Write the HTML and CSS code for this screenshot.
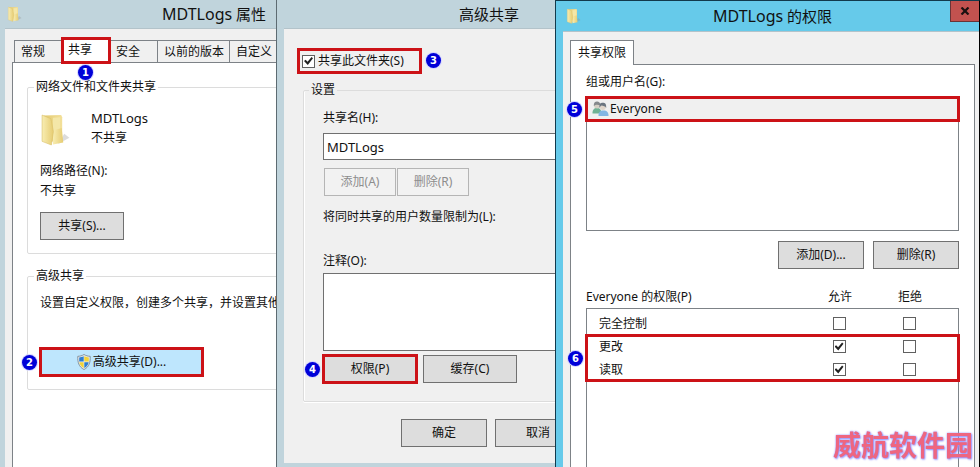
FILE: index.html
```html
<!DOCTYPE html>
<html lang="zh-CN">
<head>
    <meta charset="UTF-8">
    <meta name="viewport" content="width=device-width, initial-scale=1.0">
    <title>MDTLogs 共享权限</title>
    <link rel="stylesheet" href="styles.css">
</head>
<body>
    <svg class="defs" width="0" height="0" aria-hidden="true">
        <defs>
            <linearGradient id="folderFront" x1="0" x2="1">
                <stop offset="0" stop-color="#f8edb2"/>
                <stop offset="1" stop-color="#e6cc72"/>
            </linearGradient>
            <linearGradient id="folderBack" x1="0" x2="1">
                <stop offset="0" stop-color="#e3ca70"/>
                <stop offset="1" stop-color="#f3e09a"/>
            </linearGradient>
            <symbol id="folder" viewBox="0 0 30 32">
                <path d="M17 30 28 24 23 20z" fill="#8a8a8a" opacity=".3"/>
                <path d="M3 2.500 20 2 21 4V24L8 29z" fill="url(#folderBack)"/>
                <path d="M12 4.500 19 4V16L12 18z" fill="#f4e7a8"/>
                <path d="M12 17 20.500 14.500 22 28.500 12 30.500z" fill="url(#folderFront)"/>
                <path d="M1.500 2 10 5.500 12.500 18 10.500 31 1.500 27.500z" fill="url(#folderFront)" stroke="#dcc26c" stroke-width=".6"/>
            </symbol>
        </defs>
    </svg>

    <main class="desktop">
        <!-- 属性 -->
        <div class="pane">
            <section class="window window-props">
                <header class="title-bar">
                    <svg class="title-icon"><use href="#folder"/></svg>
                    <h1><span>MDTLogs</span> 属性</h1>
                </header>
                <div class="client">
                    <div class="tabs">
                        <button class="tab">常规</button>
                        <button class="tab active marked">共享<i class="badge badge-below">1</i></button>
                        <button class="tab">安全</button>
                        <button class="tab">以前的版本</button>
                        <button class="tab">自定义</button>
                    </div>
                    <div class="panel">
                        <fieldset class="group">
                            <legend>网络文件和文件夹共享</legend>
                            <div class="share-info">
                                <svg class="folder-icon"><use href="#folder"/></svg>
                                <div>
                                    <p class="share-name">MDTLogs</p>
                                    <p>不共享</p>
                                </div>
                            </div>
                            <p>网络路径(N):</p>
                            <p>不共享</p>
                            <button class="btn share-button">共享(S)...</button>
                        </fieldset>
                        <fieldset class="group group-advanced">
                            <legend>高级共享</legend>
                            <p>设置自定义权限，创建多个共享，并设置其他</p>
                            <button class="btn advanced-button marked">
                                <svg class="shield" viewBox="0 0 14 16">
                                    <path d="M7 .5C5 1.800 3 2.200.8 2.300.5 8 1.800 13 7 15.500 12.200 13 13.500 8 13.200 2.300 11 2.200 9 1.800 7 .5z" fill="#e8edf0" stroke="#7c8a94" stroke-width=".9"/>
                                    <path d="M6.700 2.200C5.200 3 3.800 3.300 2.200 3.400V7.600H6.700z" fill="#2f7fd0"/>
                                    <path d="M7.300 2.200C8.800 3 10.200 3.300 11.800 3.400V7.600H7.300z" fill="#f3d437"/>
                                    <path d="M2.300 8.200H6.700V14C4.200 12.600 2.800 10.800 2.300 8.200z" fill="#f3d437"/>
                                    <path d="M11.700 8.200H7.300V14C9.800 12.600 11.200 10.800 11.700 8.200z" fill="#2f7fd0"/>
                                </svg>高级共享(D)...<i class="badge badge-left">2</i>
                            </button>
                        </fieldset>
                    </div>
                </div>
            </section>
        </div>

        <!-- 高级共享 -->
        <div class="pane">
            <section class="window window-advanced">
                <header class="title-bar">
                    <h1>高级共享</h1>
                </header>
                <div class="client">
                    <label class="share-check marked">
                        <input type="checkbox" class="check" checked>共享此文件夹(S)<i class="badge badge-right">3</i>
                    </label>
                    <fieldset class="group group-settings">
                        <legend>设置</legend>
                        <label for="shareName">共享名(H):</label>
                        <input type="text" id="shareName" class="text-input" value="MDTLogs">
                        <div class="name-buttons">
                            <button class="btn" disabled>添加(A)</button>
                            <button class="btn" disabled>删除(R)</button>
                        </div>
                        <p class="limit-label">将同时共享的用户数量限制为(L):</p>
                        <label for="comment">注释(O):</label>
                        <textarea id="comment" class="text-input comment"></textarea>
                        <div class="action-buttons">
                            <button class="btn marked">权限(P)<i class="badge badge-left">4</i></button>
                            <button class="btn">缓存(C)</button>
                        </div>
                    </fieldset>
                    <div class="dialog-buttons">
                        <button class="btn">确定</button>
                        <button class="btn">取消</button>
                    </div>
                </div>
            </section>
        </div>

        <!-- 权限 -->
        <section class="window window-perms">
            <header class="title-bar">
                <svg class="title-icon"><use href="#folder"/></svg>
                <h1><span>MDTLogs</span> 的权限</h1>
                <button class="close" aria-label="关闭">
                    <svg viewBox="0 0 10 8"><path d="M1.500.5 8.500 7.500M8.500.5 1.500 7.500" stroke="#1a1010" stroke-width="2.200"/></svg>
                </button>
            </header>
            <div class="client">
                <div class="tabs">
                    <button class="tab active">共享权限</button>
                </div>
                <div class="panel">
                    <p>组或用户名(G):</p>
                    <ul class="user-list">
                        <li class="marked">
                            <svg class="users" viewBox="0 0 17 16">
                                <path d="M.5 12.500C.3 9 2 7 5 7s4.500 2 4.500 5.500z" fill="#6fb294"/>
                                <circle cx="5" cy="4.500" r="3" fill="#d5cfc4"/>
                                <path d="M1.800 5C1.500 2 3 .6 5 .6S8.500 2 8.400 4C6 4 4 3 1.800 5z" fill="#85898c"/>
                                <path d="M6.500 15C6.300 11.500 8 9.500 11.500 9.500s5.200 2 5 5.500z" fill="#82b6e4"/>
                                <circle cx="10.800" cy="6" r="3" fill="#e0d5ca"/>
                                <path d="M7.500 7C7 3 8.500 1.800 10.800 1.800S14.500 3 14.200 7C13.500 5 11 5 9.500 4.500 8.500 5 8 6 7.500 7z" fill="#6b7580"/>
                            </svg>Everyone<i class="badge badge-left">5</i>
                        </li>
                    </ul>
                    <div class="user-buttons">
                        <button class="btn">添加(D)...</button>
                        <button class="btn">删除(R)</button>
                    </div>
                    <table class="perms">
                        <thead>
                            <tr><th>Everyone 的权限(P)</th><th>允许</th><th>拒绝</th></tr>
                        </thead>
                        <tbody class="first">
                            <tr>
                                <td>完全控制</td>
                                <td><input type="checkbox" class="check" aria-label="允许完全控制"></td>
                                <td><input type="checkbox" class="check" aria-label="拒绝完全控制"></td>
                            </tr>
                        </tbody>
                        <tbody class="marked">
                            <tr>
                                <td>更改<i class="badge badge-left">6</i></td>
                                <td><input type="checkbox" class="check" aria-label="允许更改" checked></td>
                                <td><input type="checkbox" class="check" aria-label="拒绝更改"></td>
                            </tr>
                            <tr>
                                <td>读取</td>
                                <td><input type="checkbox" class="check" aria-label="允许读取" checked></td>
                                <td><input type="checkbox" class="check" aria-label="拒绝读取"></td>
                            </tr>
                        </tbody>
                    </table>
                </div>
            </div>
        </section>
    </main>
    <div class="watermark">威航软件园</div>
</body>
</html>
```
FILE: styles.css
```css
:root {
    --frame: #c0d4dc;
    --frame-active: #66caea;
    --client: #f0f0f0;
    --line: #7d8287;
    --group-line: #dcdcdc;
    --button-bg: #dddddd;
    --mark: #cc1217;
    --badge: #0000d8;
}

* {
    margin: 0;
    padding: 0;
    box-sizing: border-box;
}

body {
    font-family: "Noto Sans", "Noto Sans CJK SC", sans-serif;
    font-size: 12px;
    line-height: 20px;
    color: #111;
}

button,
input,
textarea {
    font: inherit;
    color: inherit;
}

.defs {
    position: absolute;
}

.desktop {
    display: grid;
    grid-template-columns: 277px 278px 1fr;
    height: 100vh;
    overflow: hidden;
}

/* windows */
.pane {
    display: flex;
    overflow: hidden;
    background: var(--frame);
}

.pane:first-child {
    border-right: 1px solid #5d6b72;
}

.window {
    display: flex;
    flex-direction: column;
    background: var(--frame);
}

.window-props {
    flex: 0 0 428px;
}

.window-advanced {
    flex: 0 0 424px;
}

.window-perms {
    background: var(--frame-active);
    border: 1px solid #123a4c;
    border-bottom: none;
    border-right-color: #000;
}

.title-bar {
    position: relative;
    display: flex;
    align-items: center;
    height: 28px;
    padding: 0 7px;
    flex: none;
}

.window-perms .title-bar {
    height: 30px;
    padding: 0 0 0 10px;
}

.title-bar h1 {
    flex: 1;
    text-align: center;
    font-size: 15px;
    font-weight: 400;
}

.title-bar h1 span {
    font-size: 16px;
}

.title-icon {
    width: 16px;
    height: 16px;
    margin-right: -16px;
}

.close {
    position: absolute;
    top: 0;
    right: 0;
    width: 29px;
    height: 21px;
    border: 1px solid #6a3437;
    border-top: none;
    border-right: none;
    background: #c2524f;
}

.close svg {
    width: 10px;
    height: 8px;
}

.client {
    flex: 1;
    display: flex;
    flex-direction: column;
    background: var(--client);
    border-top: 1px solid #b3c3ca;
}

.window-props .client {
    margin: 0 5px;
    padding: 11px 7px 0;
}

.window-advanced .client {
    flex: none;
    margin: 0 7px;
    padding: 20px 19px 16px;
}

.window-perms .client {
    margin-left: 7px;
    padding: 8px 4px 0 7px;
}

/* tabs */
.tabs {
    display: flex;
    padding-left: 2px;
}

.window-perms .tabs {
    padding-left: 0;
}

.tab {
    position: relative;
    flex: none;
    min-width: 48px;
    height: 22px;
    padding: 0 5px 0 6px;
    text-align: left;
    background: var(--client);
    border: 1px solid var(--line);
    border-bottom: none;
    border-left-width: 0;
    white-space: nowrap;
}

.tab:first-child {
    border-left-width: 1px;
}

.tab.active {
    z-index: 1;
    margin-top: -2px;
    height: 25px;
    margin-bottom: -1px;
    padding-bottom: 3px;
    background: #fff;
}

.window-perms .tab.active {
    margin-top: 0;
    padding: 0 7px;
}

.panel {
    flex: 1;
    display: flex;
    flex-direction: column;
    background: #fff;
    border: 1px solid var(--line);
    border-bottom: none;
}

.window-props .panel {
    padding: 14px;
    gap: 12px;
}

.window-perms .panel {
    padding: 7px 15px 0;
}

/* group boxes */
.group {
    border: 1px solid var(--group-line);
    border-radius: 2px;
    padding: 11px 12px 13px;
    white-space: nowrap;
}

.group legend {
    margin-left: -6px;
    padding: 0 2px;
}

.share-info {
    display: flex;
    gap: 19px;
    padding-bottom: 13px;
}

.folder-icon {
    width: 32px;
    height: 33px;
    margin-top: 5px;
}

.share-name {
    font-size: 13px;
}

.share-button {
    width: 84px;
    margin-top: 11px;
}

.group-advanced {
    padding-top: 7px;
    min-width: 0;
}

.advanced-button {
    display: flex;
    align-items: center;
    justify-content: center;
    width: 163px;
    margin-top: 35px;
}

.shield {
    width: 14px;
    height: 16px;
    margin-right: 2px;
}

/* buttons and fields */
.btn {
    position: relative;
    height: 28px;
    border: 1px solid #707070;
    background: var(--button-bg);
    white-space: nowrap;
}

.btn:disabled {
    color: #8d8d8d;
    border-color: #b5b5b5;
    background: #f2f2f2;
}

.advanced-button.btn {
    background: #bee6fd;
}

.check {
    appearance: none;
    display: block;
    flex: none;
    position: relative;
    width: 13px;
    height: 13px;
    background: #fff;
    border: 1px solid #606060;
}

.check:checked::after {
    content: '';
    position: absolute;
    inset: 1px;
    background: #222;
    clip-path: polygon(0 50%, 18% 36%, 40% 58%, 84% 6%, 100% 20%, 42% 94%);
}

.text-input {
    display: block;
    width: 100%;
    height: 27px;
    padding: 0 3px;
    font-size: 13px;
    background: #fff;
    border: 1px solid #707070;
    resize: none;
}

.comment {
    height: 78px;
}

.share-check {
    position: relative;
    display: flex;
    align-items: center;
    align-self: flex-start;
    gap: 3px;
    width: 123px;
    height: 24px;
    margin-left: -5px;
    padding-left: 4px;
    white-space: nowrap;
}

.group-settings {
    padding: 8px 19px 18px;
    margin-top: 7px;
    box-shadow: inset 1px 0 #fff, 0 1px #fff;
}

.group-settings legend {
    margin-left: -14px;
}

.group-settings label {
    display: block;
    margin-bottom: 5px;
}

.name-buttons {
    display: flex;
    gap: 1px;
    padding: 8px 1px 11px;
}

.name-buttons .btn {
    width: 72px;
}

.limit-label {
    margin-bottom: 24px;
}

.group-settings .limit-label + label {
    margin-bottom: 2px;
}

.action-buttons {
    display: flex;
    gap: 6px;
    padding-top: 4px;
}

.action-buttons .btn {
    width: 94px;
}

.dialog-buttons {
    display: flex;
    justify-content: flex-end;
    gap: 8px;
    padding: 17px 94px 0 0;
}

.dialog-buttons .btn,
.user-buttons .btn {
    width: 86px;
}

/* users and permissions */
.user-list {
    height: 134px;
    list-style: none;
    border: 1px solid var(--line);
    margin-top: 5px;
}

.user-list li {
    position: relative;
    display: flex;
    align-items: center;
    gap: 1px;
    height: 24px;
    margin: -1px;
    padding-left: 6px;
    background: var(--client);
}

.users {
    width: 17px;
    height: 16px;
}

.user-buttons {
    display: flex;
    justify-content: flex-end;
    gap: 9px;
    padding: 10px 0 16px;
}

.perms {
    flex: 1;
    display: flex;
    flex-direction: column;
}

.perms thead,
.perms tbody {
    display: block;
}

.perms tr {
    display: grid;
    grid-template-columns: 1fr 70px 70px;
    align-items: center;
    height: 23px;
    padding-right: 14px;
}

.perms th {
    font-weight: 400;
}

.perms th:first-child {
    text-align: left;
}

.perms tbody,
.perms::after {
    border: solid var(--line);
    border-width: 0 1px;
}

.perms::after {
    content: '';
    flex: 1;
}

.perms tbody.first {
    padding-top: 3px;
    border-top-width: 1px;
}

.perms td:first-child {
    padding-left: 12px;
}

.perms .check {
    margin: 0 auto;
}

/* step marks */
.marked {
    position: relative;
    outline: 3px solid var(--mark);
    outline-offset: -2px;
}

.badge {
    position: absolute;
    z-index: 2;
    width: 15px;
    height: 15px;
    border-radius: 50%;
    background: var(--badge);
    box-shadow: 0 0 0 1px #d5d5ff;
    color: #fff;
    font: bold 10px/15px "DejaVu Sans", sans-serif;
    text-align: center;
}

.badge-below {
    left: 16px;
    top: 26px;
}

.badge-left {
    right: 100%;
    top: 50%;
    margin: -7px 4px 0 0;
}

.badge-right {
    left: 100%;
    top: 50%;
    margin: -8px 0 0 5px;
}

.watermark {
    position: fixed;
    right: 7px;
    bottom: 3px;
    font: bold 28px/40px "Noto Sans CJK SC", sans-serif;
    color: #ee6680;
    text-shadow: 0 0 2px #8a8aff, 1px 1px 2px #9a9aff;
}
```
